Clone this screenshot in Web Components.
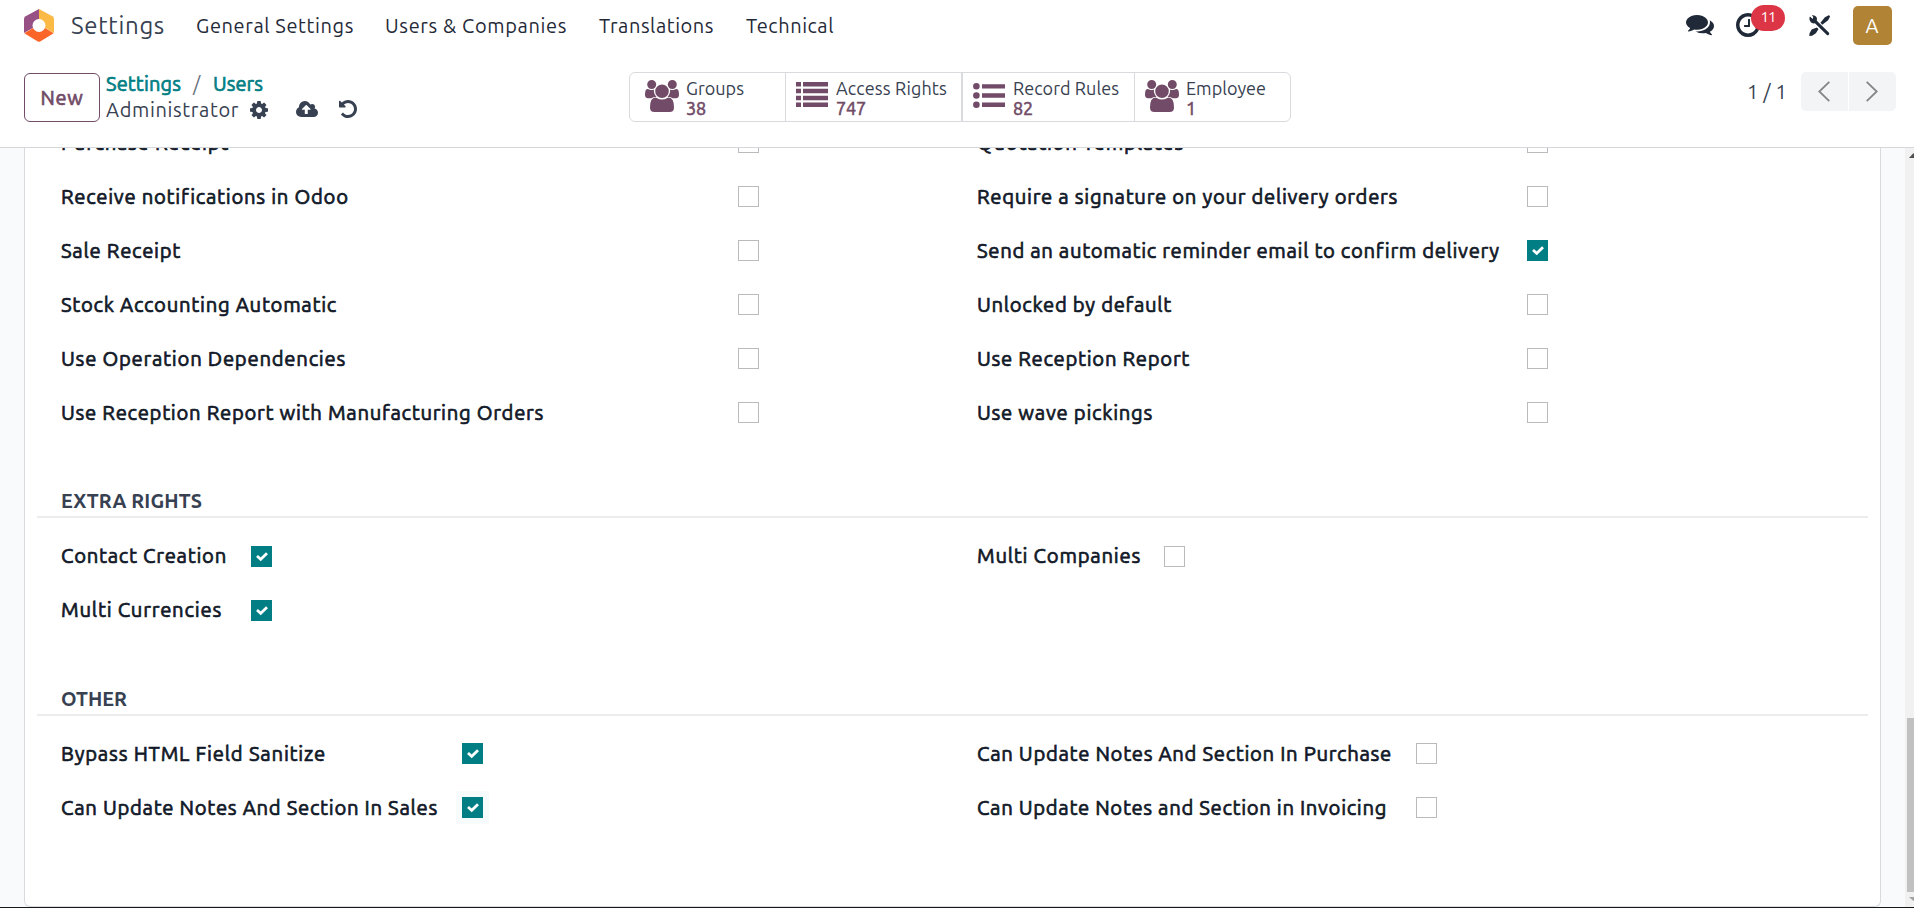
<!DOCTYPE html>
<html lang="en">
<head>
<meta charset="utf-8">
<title>Settings</title>
<style>
html,body{margin:0;height:100%;overflow:hidden}
body{font-family:Ubuntu,"Noto Sans","Open Sans",sans-serif;font-size:20px;color:#374151;background:#fff}
</style>
</head>
<body>
<settings-app></settings-app>
<script>
const define=(name,css,html,after)=>customElements.define(name,class extends HTMLElement{
  connectedCallback(){
    if(!this.shadowRoot){
      this.attachShadow({mode:'open'}).innerHTML='<style>*{box-sizing:border-box}'+css+'</style>'+(typeof html==='function'?html(this):html);
    }
    if(after)after(this);
  }
});

/* One line of text whose tracking is set so that it fills width "w". */
define('ui-text',':host{display:block;flex:none;white-space:nowrap;line-height:28px}span{display:inline-block}','<span><slot></slot></span>',el=>{
  const w=+el.getAttribute('w'),n=el.textContent.length,s=el.shadowRoot.querySelector('span');
  el.style.width=w+'px';
  const now=s.getBoundingClientRect().width;
  s.style.letterSpacing=((w-now)/n).toFixed(3)+'px';
});

const fa=(vb,d)=>`<svg viewBox="${vb}" preserveAspectRatio="none"><path fill="currentColor" d="${d}"/></svg>`;
const ICONS={
 logo:'<svg viewBox="0 0 30 33"><path fill="#985184" d="M15 0 1.6 7.3Q0 8.2 0 10V24L15 15.5z"/><path fill="#fbb945" d="M15 0l13.400 7.300Q30 8.200 30 10V24L15 15.500z"/><path fill="#fc6528" d="M.3 24.200 15 15.500l14.700 8.700-13.500 8.200q-1.200.7-2.400 0z"/><circle cx="15" cy="16.500" r="6.500" fill="#fff"/></svg>',
 users:fa('0 0 34 32','M6.700 0a4.500 4.500 0 1 1 0 9 4.500 4.500 0 0 1 0-9zM27.300 0a4.500 4.500 0 1 1 0 9 4.500 4.500 0 0 1 0-9zM17 4.500a6.800 6.800 0 1 1 0 13.600 6.800 6.800 0 0 1 0-13.600zM2.300 9q1.300 0 2 .5 2.400 1 4.600 0-.3 4.500 2.600 7.200-3.500.1-5.300 1.500H3Q0 18 0 15q0-6 2.300-6zM31.700 9q-1.300 0-2 .5-2.400 1-4.600 0 .3 4.500-2.600 7.200 3.500.1 5.300 1.500H31q3-.2 3-3.200 0-6-2.300-6zM10.500 17.500q.6 0 1.200.5 5.300 3 10.600 0 .6-.5 1.200-.5 5.500 0 5.500 10 0 4.500-4.500 4.500h-15Q5 32 5 27.500q0-10 5.500-10z'),
 list:fa('0 0 32 25','M0 0h5v4.500H0zM7 0h25v4.500H7zM0 6.800h5v4.500H0zM7 6.800h25v4.500H7zM0 13.700h5v4.500H0zM7 13.700h25v4.500H7zM0 20.500h5V25H0zM7 20.500h25V25H7z'),
 dots:fa('0 0 32 25','M3.400 0a3.300 3.300 0 1 1 0 6.600 3.300 3.300 0 0 1 0-6.600zM3.400 9.200a3.300 3.300 0 1 1 0 6.600 3.300 3.300 0 0 1 0-6.600zM3.400 18.400a3.300 3.300 0 1 1 0 6.600 3.300 3.300 0 0 1 0-6.600zM9 1.200h23v4.400H9zM9 10.300h23v4.400H9zM9 19.500h23v4.400H9z'),
 gear:fa('0 0 1536 1536','M1024 768q0-106-75-181t-181-75-181 75-75 181 75 181 181 75 181-75 75-181zm512-109v222q0 12-8 23t-20 13l-185 28q-19 54-39 91 35 50 107 138 10 12 10 25t-9 23q-27 37-99 108t-94 71q-12 0-26-9l-138-108q-44 23-91 38-16 136-29 186-7 28-36 28H657q-14 0-24.500-8.500T621 1506l-28-184q-49-16-90-37l-141 107q-10 9-25 9-14 0-25-11-126-114-165-168-7-10-7-23 0-12 8-23 15-21 51-66.500t54-70.500q-27-50-41-99L29 913q-13-2-21-12.500T0 877V655q0-12 8-23t19-13l186-28q14-46 39-92-40-57-107-138-10-12-10-24 0-10 9-23 26-36 98.500-107.500T337 135q13 0 26 10l138 107q44-23 91-38 16-136 29-186 7-28 36-28h222q14 0 24.500 8.500T915 30l28 184q49 16 90 37l142-107q9-9 24-9 13 0 25 10 129 119 165 170 7 8 7 22 0 12-8 23-15 21-51 66.500t-54 70.500q26 50 41 98l183 28q13 2 21 12.500t8 23.500z'),
 cloud:fa('0 0 1920 1408','M1280 736q0-14-9-23L919 361q-9-9-23-9t-23 9L522 712q-10 12-10 24 0 14 9 23t23 9h224v352q0 13 9.500 22.500t22.500 9.500h192q13 0 22.500-9.500t9.500-22.500V768h224q13 0 22.500-9.500T1280 736zm640 288q0 159-112.500 271.500T1536 1408H448q-185 0-316.500-131.500T0 960q0-130 70-240t188-165q-2-30-2-43 0-212 150-362T768 0q156 0 285.500 87T1242 318q71-62 166-62 106 0 181 75t75 181q0 76-41 138 130 31 213.500 135.500T1920 1024z'),
 undo:fa('0 0 1536 1536','M1536 768q0 156-61 298t-164 245-245 164-298 61q-172 0-327-72.500T177 1259q-7-10-6.500-22.500t8.500-20.500l137-138q10-9 25-9 16 2 23 12 73 95 179 147t225 52q104 0 198.500-40.500T1130 1130t109.500-163.500T1280 768t-40.500-198.500T1130 406 966.500 296.500 768 256q-98 0-188 35.500T420 393l137 138q31 30 14 69-17 40-59 40H64q-26 0-45-19T0 576V128q0-42 40-59 39-17 69 14l130 129Q346 111 483.500 55.500T768 0q156 0 298 61t245 164 164 245 61 298z'),
 chat:fa('0 0 1792 1536','M1408 512q0 139-94 257t-256.500 186.500T704 1024q-86 0-176-16-124 88-278 128-36 9-86 16h-3q-11 0-20.500-8t-11.500-21q-1-3-1-6.500t.5-6.500 2-6l2.500-5 3.500-5.500 4-5 4.500-5 4-4.500q5-6 23-25t26-29.500 22.500-29 25-38.500 20.500-44q-124-72-195-177T0 512q0-139 94-257T350.500 68.500 704 0t353.500 68.500T1314 255t94 257zm384 256q0 120-71 224.500T1526 1169q10 24 20.500 44t25 38.500 22.500 29 26 29.500 23 25l4 4.500 4.500 5 4 5 3.500 5.500 2.500 5 2 6 .5 6.500-1 6.500q-3 14-13 22t-22 7q-50-7-86-16-154-40-278-128-90 16-176 16-271 0-472-132 58 4 88 4 161 0 309-45t264-129q125-92 192-212t67-254q0-77-23-152 129 71 204 178t75 230z'),
 clock:fa('0 0 1536 1536','M896 416v448q0 14-9 23t-23 9H544q-14 0-23-9t-9-23v-64q0-14 9-23t23-9h224V416q0-14 9-23t23-9h64q14 0 23 9t9 23zm416 352q0-148-73-273t-198-198-273-73-273 73-198 198-73 273 73 273 198 198 273 73 273-73 198-198 73-273zm224 0q0 209-103 385.500T1153.500 1433 768 1536t-385.500-103T103 1153.500 0 768t103-385.500T382.500 103 768 0t385.500 103T1433 382.500 1536 768z'),
 tools:'<svg viewBox="0 0 22 22"><path fill="none" stroke="currentColor" stroke-width="3.200" stroke-linecap="round" d="M6 6.200 19.600 19.600"/><path fill="currentColor" d="M1 1.600 3.800 4.300 4.500 2 3 .3Q6.200-.2 7.800 2.200q1.200 2.300.1 4.600L6 8.700Q3.500 9.200 1.900 7.600.2 5.500.4 3.200zM12 8.200l4.700-5.800L20.700.2q1.500.2 1.300 1.600l-2 3.800-6.100 4.500zM8.200 13l1.800 1.700-2.800 4.500-4 2.500-2.900.3.300-2.900 2.200-3.800z"/></svg>',
 prev:'<svg viewBox="0 0 12 21"><path fill="none" stroke="#858585" stroke-width="1.800" d="M11.300.8 1.300 10.500l10 9.700"/></svg>',
 next:'<svg viewBox="0 0 12 21"><path fill="none" stroke="#858585" stroke-width="1.800" d="M.7.800l10 9.700-10 9.700"/></svg>',
 check:'<svg viewBox="0 0 12 9"><path fill="none" stroke="#fff" stroke-width="2.700" d="M1 4 4.700 7.300 11 1.200"/></svg>'
};
define('ui-icon',':host{display:block;flex:none}svg{display:block;width:100%;height:100%;overflow:visible}',el=>ICONS[el.getAttribute('name')],el=>{
  el.style.width=el.getAttribute('w')+'px';el.style.height=el.getAttribute('h')+'px';
});

define('nav-bar',`:host{display:flex;height:52px;padding:0 22px 0 24px;justify-content:space-between;color:#1f2937}
.l,.r{display:flex;align-items:flex-start}.l>*{margin-top:12px}
.l ui-icon{margin-top:9px}.brand{font-size:24px;color:#374151;margin:12px 31px 0 17px}
.m{margin-right:32px}.clock{position:relative;margin:13px 49px 0 22px}
.badge{position:absolute;left:15px;top:-8px;width:34px;height:26px;border-radius:13px;background:#dc3545;color:#fff;font-size:15px;display:grid;place-items:center}
.badge ui-text{line-height:20px;margin-top:-2px}
.av{width:39px;height:39px;margin:6px 0 0 23px;border-radius:5px;background:#b18435;color:#fff;display:grid;place-items:center}`,
`<div class="l"><ui-icon name="logo" w="30" h="33"></ui-icon><ui-text class="brand" w="94">Settings</ui-text>
<ui-text class="m" w="158">General Settings</ui-text><ui-text class="m" w="182" style="margin-left:-1px">Users &amp; Companies</ui-text><ui-text class="m" w="115">Translations</ui-text><ui-text w="88">Technical</ui-text></div>
<div class="r"><ui-icon name="chat" w="28" h="22" style="margin-top:15px"></ui-icon>
<div class="clock"><ui-icon name="clock" w="24" h="24"></ui-icon><div class="badge"><ui-text w="15">11</ui-text></div></div>
<ui-icon name="tools" w="21" h="21" style="margin-top:15px"></ui-icon><div class="av"><ui-text w="14">A</ui-text></div></div>`);

define('stat-button',`:host{display:flex;border-left:1px solid #d8dadd;height:100%}:host([first]){border-left:0}
ui-icon{color:#714b67}.t{font-size:18px}.t ui-text{line-height:20px}.n{color:#714b67;-webkit-text-stroke:.6px currentColor}`,
el=>{const a=k=>el.getAttribute(k);return `<ui-icon name="${a('icon')}" w="${a('iw')}" h="${a('ih')}" style="margin:${a('im')}"></ui-icon><div class="t" style="margin-top:5px"><ui-text w="${a('lw')}">${a('label')}</ui-text><ui-text class="n" w="${a('nw')}">${a('value')}</ui-text></div>`},
el=>{el.style.width=el.getAttribute('w')+'px'});

define('control-panel',`:host{display:flex;height:96px;border-bottom:1px solid #d5d7db;padding:20px 18px 0 24px}
.new{width:76px;height:49px;margin-top:1px;border:1px solid #714b67;border-radius:6px;color:#714b67;-webkit-text-stroke:.7px currentColor;display:grid;place-items:center}
.crumb{margin-left:6px;width:523px}
.crumb ui-text{line-height:26px}.a,.b{display:flex;align-items:center;height:26px;margin-top:-1px}.a{color:#017e84;-webkit-text-stroke:.7px currentColor}.a .s{color:#6b7280;-webkit-text-stroke:0;margin:0 12px}.b ui-text{margin-top:2px}
.stats{display:flex;width:662px;height:50px;border:1px solid #d8dadd;border-radius:6px}
.p{margin:6px 14px 0 auto}.g{display:flex;gap:1px}.g div{width:47px;height:39px;background:#f3f4f6;display:grid;place-items:center;padding-right:1px}
.g div:first-child{border-radius:5px 0 0 5px}.g div:last-child{border-radius:0 5px 5px 0}`,
`<div class="new"><ui-text w="43">New</ui-text></div>
<div class="crumb"><div class="a"><ui-text w="75">Settings</ui-text><ui-text class="s" w="8">/</ui-text><ui-text w="50">Users</ui-text></div>
<div class="b"><ui-text w="133">Administrator</ui-text><ui-icon name="gear" w="18" h="18" style="margin:1px 0 0 11px"></ui-icon><ui-icon name="cloud" w="22" h="16" style="margin:-1px 0 0 28px"></ui-icon><ui-icon name="undo" w="18" h="18" style="margin:-1px 0 0 21px"></ui-icon></div></div>
<div class="stats"><stat-button first w="155" icon="users" iw="34" ih="32" im="7px 7px 0 15px" label="Groups" lw="58" value="38" nw="20"></stat-button>
<stat-button w="176" icon="list" iw="32" ih="25" im="9px 8px 0 10px" label="Access Rights" lw="111" value="747" nw="30"></stat-button>
<stat-button style="border-left-width:2px" w="173" icon="dots" iw="32" ih="25" im="10px 8px 0 10px" label="Record Rules" lw="106" value="82" nw="20"></stat-button>
<stat-button w="156" icon="users" iw="34" ih="32" im="7px 7px 0 10px" label="Employee" lw="80" value="1" nw="10"></stat-button></div>
<ui-text class="p" w="40">1 / 1</ui-text><div class="g"><div><ui-icon name="prev" w="12" h="21"></ui-icon></div><div><ui-icon name="next" w="12" h="21"></ui-icon></div></div>`);

define('check-box',`:host{display:grid;place-items:center;flex:none;width:21px;height:21px;border:1px solid #b9bbbd;background:#fff;box-sizing:border-box}
:host([checked]){border-color:#017e84;background:#017e84}:host([focused]){box-shadow:0 0 0 6px #f8fbfc}`,
el=>el.hasAttribute('checked')?'<ui-icon name="check" w="12" h="9"></ui-icon>':'');

define('field-row',`:host{display:flex;height:54px;align-items:flex-start;color:#111827;font-size:20.3px;-webkit-text-stroke:.7px currentColor}ui-text{margin-top:var(--label-shift,-3px)}.c{flex:none}`,
el=>`<div class="c" style="width:${el.getAttribute('box')}px"><ui-text w="${el.getAttribute('w')}"><slot></slot></ui-text></div><check-box ${el.hasAttribute('checked')?'checked':''} ${el.hasAttribute('focused')?'focused':''}></check-box>`,
el=>{
  const t=el.shadowRoot.querySelector('ui-text'),s=t.shadowRoot.querySelector('span');
  s.style.letterSpacing='0';
  s.style.letterSpacing=((+el.getAttribute('w')-s.getBoundingClientRect().width)/el.textContent.length).toFixed(3)+'px';
});

define('field-grid',':host{display:grid;grid-template-columns:916px 1fr;padding-left:24px;align-items:start}','<div><slot name="left"></slot></div><div><slot name="right"></slot></div>');
define('section-title',':host{display:block;box-sizing:border-box;height:34px;padding:3px 0 0 24px;border-bottom:2px solid #ebecee;font-weight:700;font-size:19.8px}',el=>`<ui-text w="${el.getAttribute('w')}">${el.getAttribute('label')}</ui-text>`);

define('scroll-bar',`:host{display:flex;flex-direction:column;width:9px;background:#f1f1f1;overflow:hidden;flex:none}
.u{margin:5px 0 0 4px}.t{height:174px;margin:auto 0 5px 2px;background:#c1c1c1}svg{display:block;flex:none}.d{margin:0 0 6px 4px}`,
'<svg class="u" width="9" height="5"><path fill="#505050" d="M0 5 4.500 0 9 5z"/></svg><div class="t"></div><svg class="d" width="9" height="4"><path fill="#a3a3a3" d="M0 0h9L4.500 4z"/></svg>');

const row=(side,w,box,text,flags='')=>`<field-row slot="${side}" w="${w}" box="${box}" ${flags}>${text}</field-row>`;
define('form-sheet',`:host{display:block;box-sizing:border-box;width:1857px;height:759px;margin-left:24px;background:#fff;border:1px solid #d8dadd;border-top:0;border-radius:0 0 6px 6px;padding:0 12px;overflow:hidden}
.x{margin-top:-16px;height:352px}.y{margin-top:28px;height:136px;--label-shift:-4px}.z{margin-top:27px}`,
`<field-grid class="x">
${row('left',168,677,'Purchase Receipt')}${row('left',287,677,'Receive notifications in Odoo')}${row('left',120,677,'Sale Receipt')}${row('left',276,677,'Stock Accounting Automatic')}${row('left',285,677,'Use Operation Dependencies')}${row('left',483,677,'Use Reception Report with Manufacturing Orders')}
${row('right',207,550,'Quotation Templates')}${row('right',421,550,'Require a signature on your delivery orders')}${row('right',522,550,'Send an automatic reminder email to confirm delivery','checked')}${row('right',195,550,'Unlocked by default')}${row('right',213,550,'Use Reception Report')}${row('right',176,550,'Use wave pickings')}
</field-grid>
<section-title w="141" label="EXTRA RIGHTS"></section-title>
<field-grid class="y">${row('left',166,190,'Contact Creation','checked')}${row('left',161,190,'Multi Currencies','checked')}${row('right',164,187,'Multi Companies')}</field-grid>
<section-title w="66" label="OTHER"></section-title>
<field-grid class="z">${row('left',265,401,'Bypass HTML Field Sanitize','checked')}${row('left',377,401,'Can Update Notes And Section In Sales','checked focused')}${row('right',415,439,'Can Update Notes And Section In Purchase')}${row('right',410,439,'Can Update Notes and Section in Invoicing')}</field-grid>`);

define('settings-app',`:host{display:flex;flex-direction:column;width:1914px;height:908px;overflow:hidden;border-bottom:1px solid #16181b;box-sizing:border-box}
nav-bar,control-panel{box-sizing:border-box;flex:none}
main{display:flex;justify-content:space-between;flex:1;min-height:0;background:#f9fafb}`,
'<nav-bar></nav-bar><control-panel></control-panel><main><form-sheet></form-sheet><scroll-bar></scroll-bar></main>');
</script>
</body>
</html>
